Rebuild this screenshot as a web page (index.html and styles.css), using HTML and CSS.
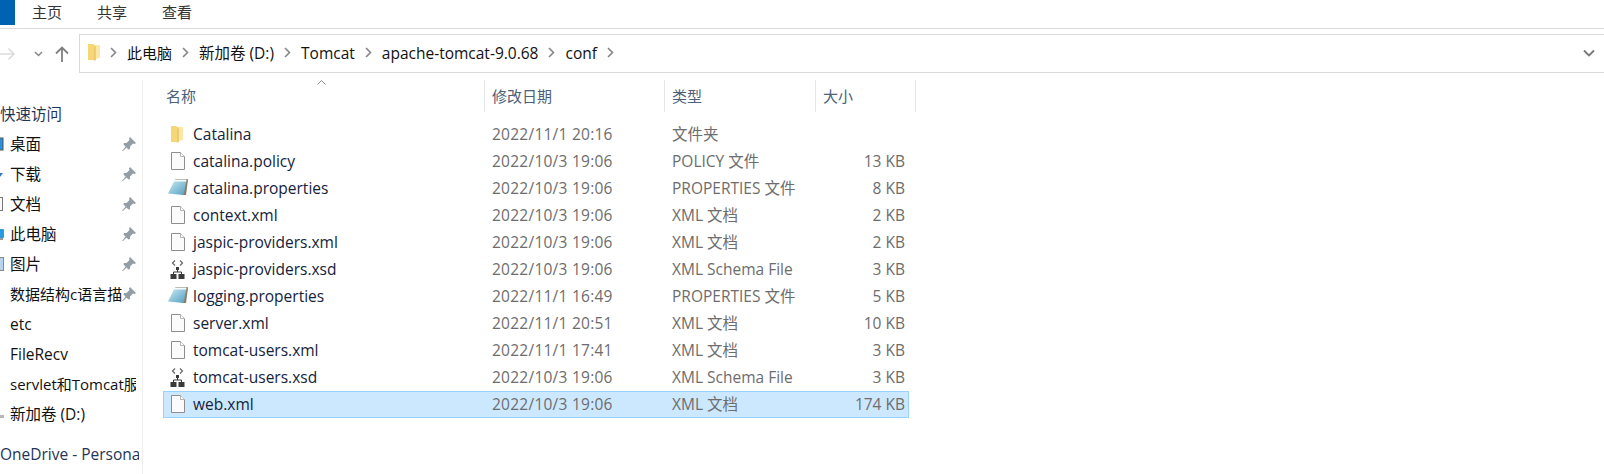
FILE: index.html
```html
<!DOCTYPE html>
<html lang="zh-CN">

<head>
    <meta charset="UTF-8">
    <title>conf</title>
    <link rel="stylesheet" href="styles.css">
</head>

<body>
    <svg class="defs" width="0" height="0">
        <defs>
            <linearGradient id="pad" x1="0" y1="0" x2="1" y2="1">
                <stop offset="0" stop-color="#cdeaf2" />
                <stop offset="1" stop-color="#4f9fc2" />
            </linearGradient>
        </defs>
        <symbol id="file" viewBox="0 0 20 20">
            <path d="M3.500 .5h9l4 4v13h-13z" fill="#fbfbfb" stroke="#8e8e8e" />
            <path d="M12.500 .5v4h4" fill="#fff" stroke="#b5b5b5" />
        </symbol>
        <symbol id="folder" viewBox="0 0 20 20">
            <path d="M3 1h5l1 1h6v13l-7 1.500H3z" fill="#fbe7a6" />
            <path d="M3 1h4.500l3 1.500V17.500l-3-.5H3z" fill="#f6d778" />
            <path d="M9.500 3.500h1v14h-1z" fill="#e3bc5a" />
        </symbol>
        <symbol id="notepad" viewBox="0 0 20 20">
            <path d="M7 0h12.500l.5 1-2 15h-4z" fill="#8b7d68" />
            <path d="M6.500 1.500h12L15.500 16 0 14.500z" fill="url(#pad)" />
            <path d="M6.500 .5h12l-.3 2H5z" fill="#f4fbfd" />
        </symbol>
        <symbol id="schema" viewBox="0 0 20 20">
            <path d="M7 .5 4.500 3 7 5.500M12 .5 14.500 3 12 5.500" fill="none" stroke="#666" stroke-width="1.200" />
            <path d="M8 7h3v3H8zM2.500 14h6v5h-6zM10.500 14h6v5h-6z" fill="#3a3a3a" />
            <path d="M9.500 10v2M5.500 14v-2h8v2" fill="none" stroke="#3a3a3a" />
        </symbol>
        <symbol id="pin" viewBox="0 0 14 14">
            <path d="M8 0 14 6 12.500 7 11 6.500 8 9.500 8 12 6.500 12.500 1.500 7.500 2 6 4.500 6 7.500 3 7 1.500zM4 9 5 10 1 14 0 14z" fill="#929da6" />
        </symbol>
        <symbol id="crumb" viewBox="0 0 7 11">
            <path d="M1 1l4.500 4.500L1 10" fill="none" stroke="#858585" stroke-width="1.600" />
        </symbol>
    </svg>

    <div class="ribbon">
        <div class="file-tab"></div>
        <span>主页</span>
        <span>共享</span>
        <span>查看</span>
    </div>

    <div class="navbar">
        <div class="nav-buttons">
            <svg class="nav-back" width="16" height="14" viewBox="0 0 16 14">
                <path d="M0 7h14M8.500 1.500 14 7l-5.500 5.500" fill="none" stroke="#dcdcdc" stroke-width="1.600" />
            </svg>
            <svg class="nav-down" width="9" height="6" viewBox="0 0 9 6">
                <path d="M1 1l3.500 3.500L8 1" fill="none" stroke="#888" stroke-width="1.500" />
            </svg>
            <svg class="nav-up" width="14" height="16" viewBox="0 0 14 16">
                <path d="M7 16V2M1 7.500 7 1.500l6 6" fill="none" stroke="#808080" stroke-width="1.800" />
            </svg>
        </div>
        <div class="address">
            <svg class="address-folder" width="20" height="20"><use href="#folder" /></svg>
            <svg class="crumb crumb-first" width="7" height="11"><use href="#crumb" /></svg>
            <span class="crumb-cjk">此电脑</span>
            <svg class="crumb" width="7" height="11"><use href="#crumb" /></svg>
            <span>新加卷 (D:)</span>
            <svg class="crumb" width="7" height="11"><use href="#crumb" /></svg>
            <span>Tomcat</span>
            <svg class="crumb" width="7" height="11"><use href="#crumb" /></svg>
            <span>apache-tomcat-9.0.68</span>
            <svg class="crumb" width="7" height="11"><use href="#crumb" /></svg>
            <span>conf</span>
            <svg class="crumb" width="7" height="11"><use href="#crumb" /></svg>
            <svg class="address-down" width="12" height="8" viewBox="0 0 12 8">
                <path d="M1 1.500l5 5 5-5" fill="none" stroke="#777" stroke-width="1.800" />
            </svg>
        </div>
    </div>

    <div class="main">
        <ul class="sidebar">
            <li class="side-quick"><span class="side-name">快速访问</span></li>
            <li>
                <svg class="side-icon" width="4" height="14"><rect x="-6" y="1" width="9" height="12" fill="#2b90d9" stroke="#555" /></svg>
                <span class="side-name">桌面</span>
                <svg class="pin" width="14" height="14"><use href="#pin" /></svg>
            </li>
            <li>
                <svg class="side-icon" width="4" height="14"><path d="M-2 6h5l-3 4z" fill="#2b7cc4" /></svg>
                <span class="side-name">下载</span>
                <svg class="pin" width="14" height="14"><use href="#pin" /></svg>
            </li>
            <li>
                <svg class="side-icon" width="4" height="14"><rect x="-6" y="0.500" width="8.500" height="13" fill="#fafafa" stroke="#777" /></svg>
                <span class="side-name">文档</span>
                <svg class="pin" width="14" height="14"><use href="#pin" /></svg>
            </li>
            <li>
                <svg class="side-icon" width="4" height="14"><rect x="-6" y="2" width="10" height="9" rx="1" fill="#2b9be0" /><path d="M-2 11h5v2h-5z" fill="#999" /></svg>
                <span class="side-name">此电脑</span>
                <svg class="pin" width="14" height="14"><use href="#pin" /></svg>
            </li>
            <li>
                <svg class="side-icon" width="4" height="14"><rect x="-6" y="0.500" width="9.500" height="13" fill="#b9d4ee" stroke="#888" /></svg>
                <span class="side-name">图片</span>
                <svg class="pin" width="14" height="14"><use href="#pin" /></svg>
            </li>
            <li>
                <span class="side-spacer"></span>
                <span class="side-name side-narrow">数据结构c语言描</span>
                <svg class="pin" width="14" height="14"><use href="#pin" /></svg>
            </li>
            <li><span class="side-spacer"></span><span class="side-name">etc</span></li>
            <li><span class="side-spacer"></span><span class="side-name">FileRecv</span></li>
            <li><span class="side-spacer"></span><span class="side-name side-narrow">servlet和Tomcat服</span></li>
            <li>
                <svg class="side-icon" width="4" height="14"><path d="M-3 8h7v3h-7z" fill="#b8b8b8" /></svg>
                <span class="side-name">新加卷 (D:)</span>
            </li>
            <li class="side-onedrive"><span class="side-name">OneDrive - Persona</span></li>
        </ul>

        <div class="content">
            <div class="head">
                <svg class="sort-caret" width="9" height="5" viewBox="0 0 9 5">
                    <path d="M.5 4.500l4-4 4 4" fill="none" stroke="#8a8a8a" />
                </svg>
                <div class="head-cell">名称</div>
                <div class="head-cell">修改日期</div>
                <div class="head-cell">类型</div>
                <div class="head-cell">大小</div>
            </div>

            <div class="rows">
                <div class="row">
                    <div class="name"><svg width="20" height="20"><use href="#folder" /></svg>Catalina</div>
                    <div class="cell date">2022/11/1 20:16</div>
                    <div class="cell">文件夹</div>
                    <div class="cell size"></div>
                </div>
                <div class="row">
                    <div class="name"><svg width="20" height="20"><use href="#file" /></svg>catalina.policy</div>
                    <div class="cell date">2022/10/3 19:06</div>
                    <div class="cell">POLICY 文件</div>
                    <div class="cell size">13 KB</div>
                </div>
                <div class="row">
                    <div class="name"><svg width="20" height="20"><use href="#notepad" /></svg>catalina.properties</div>
                    <div class="cell date">2022/10/3 19:06</div>
                    <div class="cell">PROPERTIES 文件</div>
                    <div class="cell size">8 KB</div>
                </div>
                <div class="row">
                    <div class="name"><svg width="20" height="20"><use href="#file" /></svg>context.xml</div>
                    <div class="cell date">2022/10/3 19:06</div>
                    <div class="cell">XML 文档</div>
                    <div class="cell size">2 KB</div>
                </div>
                <div class="row">
                    <div class="name"><svg width="20" height="20"><use href="#file" /></svg>jaspic-providers.xml</div>
                    <div class="cell date">2022/10/3 19:06</div>
                    <div class="cell">XML 文档</div>
                    <div class="cell size">2 KB</div>
                </div>
                <div class="row">
                    <div class="name"><svg width="20" height="20"><use href="#schema" /></svg>jaspic-providers.xsd</div>
                    <div class="cell date">2022/10/3 19:06</div>
                    <div class="cell">XML Schema File</div>
                    <div class="cell size">3 KB</div>
                </div>
                <div class="row">
                    <div class="name"><svg width="20" height="20"><use href="#notepad" /></svg>logging.properties</div>
                    <div class="cell date">2022/11/1 16:49</div>
                    <div class="cell">PROPERTIES 文件</div>
                    <div class="cell size">5 KB</div>
                </div>
                <div class="row">
                    <div class="name"><svg width="20" height="20"><use href="#file" /></svg>server.xml</div>
                    <div class="cell date">2022/11/1 20:51</div>
                    <div class="cell">XML 文档</div>
                    <div class="cell size">10 KB</div>
                </div>
                <div class="row">
                    <div class="name"><svg width="20" height="20"><use href="#file" /></svg>tomcat-users.xml</div>
                    <div class="cell date">2022/11/1 17:41</div>
                    <div class="cell">XML 文档</div>
                    <div class="cell size">3 KB</div>
                </div>
                <div class="row">
                    <div class="name"><svg width="20" height="20"><use href="#schema" /></svg>tomcat-users.xsd</div>
                    <div class="cell date">2022/10/3 19:06</div>
                    <div class="cell">XML Schema File</div>
                    <div class="cell size">3 KB</div>
                </div>
                <div class="row selected">
                    <div class="name"><svg width="20" height="20"><use href="#file" /></svg>web.xml</div>
                    <div class="cell date">2022/10/3 19:06</div>
                    <div class="cell">XML 文档</div>
                    <div class="cell size">174 KB</div>
                </div>
            </div>
        </div>
    </div>
</body>

</html>
```

FILE: styles.css
```css
* {
    margin: 0;
    padding: 0;
    box-sizing: border-box;
}

html,
body {
    height: 474px;
    overflow: hidden;
}

body {
    background-color: white;
    color: #1a1a1a;
    font-family: "Open Sans", "Noto Sans CJK SC", sans-serif;
    font-size: 15.5px;
    line-height: 20px;
}

.defs {
    display: block;
    height: 0;
}

.ribbon {
    display: flex;
    height: 29px;
    padding-bottom: 5px;
    align-items: center;
    border-bottom: 1px solid #dadada;
    color: #333;
    font-size: 15px;
}

.file-tab {
    align-self: flex-start;
    width: 15px;
    height: 25px;
    margin-right: 17px;
    background-color: #0063b1;
}

.ribbon span {
    width: 65px;
}

.navbar {
    display: flex;
    height: 39px;
    margin-top: 5px;
}

.nav-buttons {
    display: flex;
    width: 79px;
    align-items: center;
}

.nav-down {
    margin-left: 18px;
}

.nav-up {
    margin-left: 12px;
}

.address {
    display: flex;
    flex: 1;
    padding-left: 5px;
    padding-bottom: 2px;
    align-items: center;
    border: 1px solid #d9d9d9;
    border-right: none;
    color: #111;
}

.address-folder {
    flex-shrink: 0;
}

.crumb {
    margin: 0 10px;
}

.crumb-first {
    margin-left: 5px;
    margin-right: 10px;
}

.crumb-cjk {
    font-size: 15px;
}

.address-down {
    margin-left: auto;
    margin-right: 9px;
}

.main {
    display: flex;
    margin-top: 7px;
}

.sidebar {
    width: 143px;
    height: 394px;
    padding-top: 19px;
    list-style: none;
    border-right: 1px solid #f0f0f0;
    color: #111;
}

.sidebar li {
    display: flex;
    height: 30px;
    padding-right: 6px;
    align-items: center;
}

.sidebar .side-onedrive {
    margin-top: 10px;
    padding-right: 3px;
    color: #1f3557;
}

.sidebar .side-quick {
    padding-right: 0;
    color: #1f3557;
}

.side-icon {
    flex-shrink: 0;
    overflow: hidden;
}

.side-spacer {
    flex-shrink: 0;
    width: 4px;
}

.side-name {
    flex: 1;
    min-width: 0;
    margin-left: 6px;
    overflow: hidden;
    white-space: nowrap;
}

.side-narrow {
    font-size: 15px;
}

.side-quick .side-name,
.side-onedrive .side-name {
    margin-left: 0;
}

.pin {
    flex-shrink: 0;
}

.content {
    width: 773px;
    padding-left: 20px;
}

.head {
    position: relative;
    display: grid;
    grid-template-columns: 322px 180px 151px 100px;
    height: 32px;
    margin-bottom: 9px;
    color: #4c607a;
    font-size: 15px;
}

.sort-caret {
    position: absolute;
    left: 154px;
    top: 0;
}

.head-cell {
    display: flex;
    padding-left: 3px;
    align-items: center;
    border-right: 1px solid #e5e5e5;
}

.head-cell + .head-cell {
    padding-left: 7px;
}

.rows {
    width: 746px;
}

.row {
    display: grid;
    grid-template-columns: 321px 180px 151px 1fr;
    height: 27px;
    padding-bottom: 2px;
    align-items: center;
}

.name {
    display: flex;
    padding-left: 5px;
    align-items: center;
    gap: 5px;
    color: #14233a;
}

.name svg {
    margin-top: 2px;
}

.cell {
    padding-left: 8px;
    color: #6d6d6d;
}

.date {
    letter-spacing: 0.25px;
}

.size {
    padding-right: 4px;
    text-align: right;
}

.selected {
    background-color: #cce8ff;
    box-shadow: inset 0 0 0 1px #99d1ff;
}
```
